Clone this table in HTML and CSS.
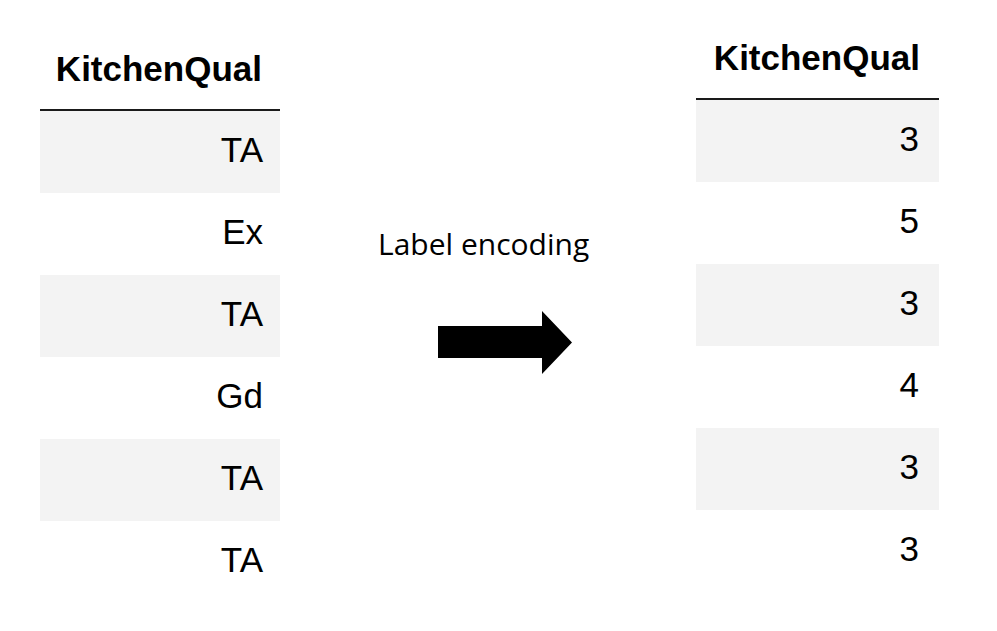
FILE: index.html
```html
<!DOCTYPE html>
<html>
<head>
<meta charset="utf-8">
<link rel="stylesheet" href="styles.css">
</head>
<body>
<div class="page">
  <table class="df df-left">
    <thead><tr><th>KitchenQual</th></tr></thead>
    <tbody>
      <tr class="odd"><td>TA</td></tr>
      <tr><td>Ex</td></tr>
      <tr class="odd"><td>TA</td></tr>
      <tr><td>Gd</td></tr>
      <tr class="odd"><td>TA</td></tr>
      <tr><td>TA</td></tr>
    </tbody>
  </table>
  <div class="middle">
    <div class="label">Label encoding</div>
    <svg class="arrow" width="134" height="63" viewBox="0 0 134 63">
      <polygon points="0,15 104,15 104,0 134,31.5 104,63 104,47 0,47" fill="#000"/>
    </svg>
  </div>
  <table class="df df-right">
    <thead><tr><th>KitchenQual</th></tr></thead>
    <tbody>
      <tr class="odd"><td>3</td></tr>
      <tr><td>5</td></tr>
      <tr class="odd"><td>3</td></tr>
      <tr><td>4</td></tr>
      <tr class="odd"><td>3</td></tr>
      <tr><td>3</td></tr>
    </tbody>
  </table>
</div>
</body>
</html>
```

FILE: styles.css
```css
html, body {
  margin: 0;
  padding: 0;
  background: #fff;
}
.page {
  display: flex;
  align-items: flex-start;
  padding-left: 40px;
  font-family: "Liberation Sans", Arial, sans-serif;
  color: #000;
}
.df {
  border-collapse: collapse;
  border-spacing: 0;
}
.df-left {
  width: 240px;
  margin-top: 30px;
}
.df-right {
  width: 243px;
  margin-top: 19px;
}
.df th {
  font-size: 35px;
  font-weight: bold;
  line-height: 40px;
  height: 80px;
  padding: 0 18px 20px 0;
  text-align: right;
  vertical-align: bottom;
  border-bottom: 2px solid #1a1a1a;
  box-sizing: border-box;
}
.df td {
  font-size: 35px;
  line-height: 78px;
  height: 82px;
  padding: 0 17px 4px 0;
  text-align: right;
  box-sizing: border-box;
}
.df-right th { padding-right: 19px; }
.df-right td { padding-right: 20px; }
.df tr.odd td {
  background: #f3f3f3;
}
.middle {
  width: 416px;
  display: flex;
  flex-direction: column;
  align-items: flex-start;
  padding-top: 226px;
}
.label {
  margin-left: 98px;
  font-family: "Open Sans", "Noto Sans", sans-serif;
  font-size: 30px;
  line-height: 36px;
}
.arrow {
  display: block;
  margin-left: 158px;
  margin-top: 49px;
}
```
